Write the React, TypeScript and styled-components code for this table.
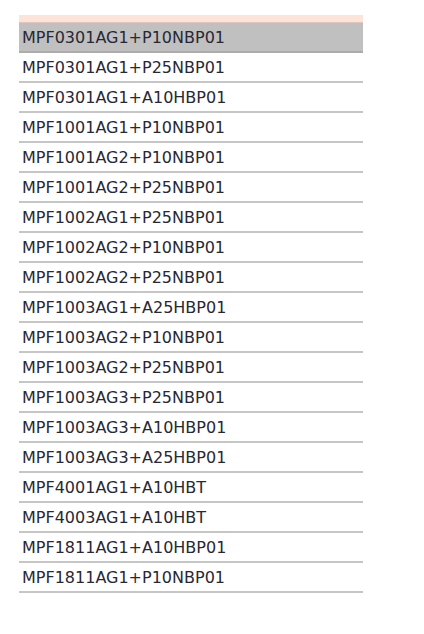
import React, { FC } from 'react'
import styled, { createGlobalStyle } from 'styled-components'

const codes = [
  'MPF0301AG1+P10NBP01',
  'MPF0301AG1+P25NBP01',
  'MPF0301AG1+A10HBP01',
  'MPF1001AG1+P10NBP01',
  'MPF1001AG2+P10NBP01',
  'MPF1001AG2+P25NBP01',
  'MPF1002AG1+P25NBP01',
  'MPF1002AG2+P10NBP01',
  'MPF1002AG2+P25NBP01',
  'MPF1003AG1+A25HBP01',
  'MPF1003AG2+P10NBP01',
  'MPF1003AG2+P25NBP01',
  'MPF1003AG3+P25NBP01',
  'MPF1003AG3+A10HBP01',
  'MPF1003AG3+A25HBP01',
  'MPF4001AG1+A10HBT',
  'MPF4003AG1+A10HBT',
  'MPF1811AG1+A10HBP01',
  'MPF1811AG1+P10NBP01',
]

const Global = createGlobalStyle`
  html, body {
    margin: 0;
    padding: 0;
    background: #ffffff;
  }
`

const App: FC = () => {
  return (
    <>
      <Global />
      <Page>
        <List>
          <Header />
          {codes.map((code, i) => (
            <Row key={code} selected={i === 0}>
              {code}
            </Row>
          ))}
        </List>
      </Page>
    </>
  )
}

export default App

const Page = styled.div`
  width: 424px;
  height: 634px;
  padding: 15px 0 0 19px;
  box-sizing: border-box;
  background: #ffffff;
`
const List = styled.div`
  width: 344px;
  display: flex;
  flex-direction: column;
`
const Header = styled.div`
  height: 7px;
  background: #fee3d8;
  border-bottom: 1px solid #dcc6bd;
`
const Row = styled.div<{ selected?: boolean }>`
  height: 27px;
  padding-top: 1px;
  line-height: 28px;
  padding-left: 3px;
  font-family: 'DejaVu Sans', Verdana, sans-serif;
  font-size: 16px;
  color: #282834;
  background: ${p => (p.selected ? '#c0c0c0' : '#ffffff')};
  border-bottom: 2px solid ${p => (p.selected ? '#acacac' : '#c6c6c6')};
  white-space: nowrap;
`
